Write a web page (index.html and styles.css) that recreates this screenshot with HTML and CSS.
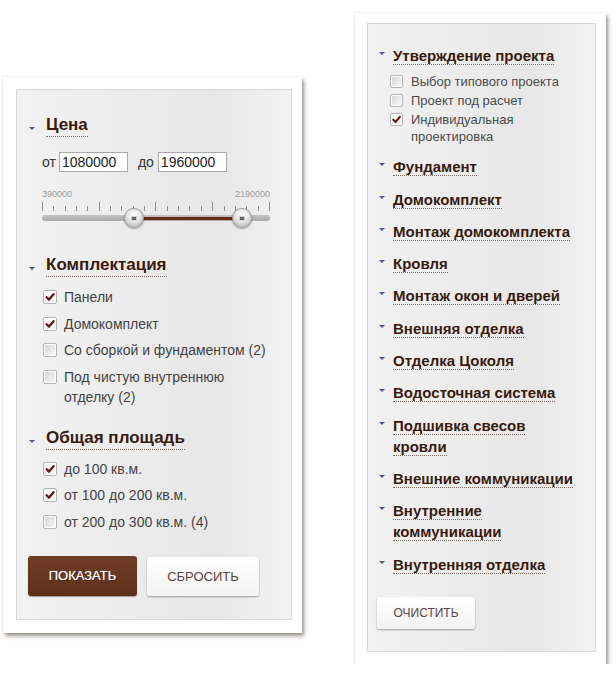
FILE: index.html
```html
<!DOCTYPE html>
<html lang="ru">
<head>
<meta charset="utf-8">
<title>Фильтр</title>
<link rel="stylesheet" href="styles.css">
</head>
<body>
<div class="page">
  <div class="card card-left">
    <div class="inner inner-left">
      <div class="lsec">
        <div class="head-l"><span class="arrow"></span><span class="title-l"><span class="link-l">Цена</span></span></div>
        <div class="price">
          <span class="plabel">от</span><input class="field" type="text" value="1080000">
          <span class="plabel plabel-to">до</span><input class="field" type="text" value="1960000">
        </div>
        <div class="slider">
          <div class="scale"><span>390000</span><span>2190000</span></div>
          <div class="ticks">
            <i class="major"></i><i></i><i></i><i></i><i></i>
            <i class="major"></i><i></i><i></i><i></i><i></i>
            <i class="major"></i><i></i><i></i><i></i><i></i>
            <i class="major"></i><i></i><i></i><i></i><i></i>
            <i class="major"></i>
          </div>
          <div class="track">
            <div class="range" style="left:92px;width:108px"></div>
            <span class="handle" style="left:82px"></span>
            <span class="handle" style="left:190px"></span>
          </div>
        </div>
      </div>

      <div class="lsec lsec-2">
        <div class="head-l"><span class="arrow"></span><span class="title-l"><span class="link-l">Комплектация</span></span></div>
        <div class="list-l">
          <div class="row-l"><span class="cb on"><svg viewBox="0 0 14 14"><path d="M3.6 7.2 L6 9.6 L10.6 4.2"/></svg></span><span class="lbl-l">Панели</span></div>
          <div class="row-l"><span class="cb on"><svg viewBox="0 0 14 14"><path d="M3.6 7.2 L6 9.6 L10.6 4.2"/></svg></span><span class="lbl-l">Домокомплект</span></div>
          <div class="row-l"><span class="cb"></span><span class="lbl-l">Со сборкой и фундаментом (2)</span></div>
          <div class="row-l"><span class="cb"></span><span class="lbl-l">Под чистую внутреннюю отделку (2)</span></div>
        </div>
      </div>

      <div class="lsec lsec-3">
        <div class="head-l"><span class="arrow"></span><span class="title-l"><span class="link-l">Общая площадь</span></span></div>
        <div class="list-l list-l3">
          <div class="row-l"><span class="cb on"><svg viewBox="0 0 14 14"><path d="M3.6 7.2 L6 9.6 L10.6 4.2"/></svg></span><span class="lbl-l">до 100 кв.м.</span></div>
          <div class="row-l"><span class="cb on"><svg viewBox="0 0 14 14"><path d="M3.6 7.2 L6 9.6 L10.6 4.2"/></svg></span><span class="lbl-l">от 100 до 200 кв.м.</span></div>
          <div class="row-l"><span class="cb"></span><span class="lbl-l">от 200 до 300 кв.м. (4)</span></div>
        </div>
      </div>

      <div class="buttons">
        <button class="btn btn-show" type="button">ПОКАЗАТЬ</button>
        <button class="btn btn-reset" type="button">СБРОСИТЬ</button>
      </div>
    </div>
  </div>

  <div class="card card-right">
    <div class="inner inner-right">
      <div class="rsec">
        <div class="head-r"><span class="arrow"></span><span class="title-r"><span class="link-r">Утверждение проекта</span></span></div>
        <div class="list-r">
          <div class="row-r"><span class="cb cb-s"></span><span class="lbl-r">Выбор типового проекта</span></div>
          <div class="row-r"><span class="cb cb-s"></span><span class="lbl-r">Проект под расчет</span></div>
          <div class="row-r"><span class="cb cb-s on"><svg viewBox="0 0 14 14"><path d="M3.6 7.2 L6 9.6 L10.6 4.2"/></svg></span><span class="lbl-r">Индивидуальная проектировка</span></div>
        </div>
      </div>
      <div class="rsec"><div class="head-r"><span class="arrow"></span><span class="title-r"><span class="link-r">Фундамент</span></span></div></div>
      <div class="rsec"><div class="head-r"><span class="arrow"></span><span class="title-r"><span class="link-r">Домокомплект</span></span></div></div>
      <div class="rsec"><div class="head-r"><span class="arrow"></span><span class="title-r"><span class="link-r">Монтаж домокомплекта</span></span></div></div>
      <div class="rsec"><div class="head-r"><span class="arrow"></span><span class="title-r"><span class="link-r">Кровля</span></span></div></div>
      <div class="rsec"><div class="head-r"><span class="arrow"></span><span class="title-r"><span class="link-r">Монтаж окон и дверей</span></span></div></div>
      <div class="rsec"><div class="head-r"><span class="arrow"></span><span class="title-r"><span class="link-r">Внешняя отделка</span></span></div></div>
      <div class="rsec"><div class="head-r"><span class="arrow"></span><span class="title-r"><span class="link-r">Отделка Цоколя</span></span></div></div>
      <div class="rsec"><div class="head-r"><span class="arrow"></span><span class="title-r"><span class="link-r">Водосточная система</span></span></div></div>
      <div class="rsec"><div class="head-r"><span class="arrow"></span><span class="title-r"><span class="link-r">Подшивка свесов кровли</span></span></div></div>
      <div class="rsec"><div class="head-r"><span class="arrow"></span><span class="title-r"><span class="link-r">Внешние коммуникации</span></span></div></div>
      <div class="rsec"><div class="head-r"><span class="arrow"></span><span class="title-r"><span class="link-r">Внутренние коммуникации</span></span></div></div>
      <div class="rsec"><div class="head-r"><span class="arrow"></span><span class="title-r"><span class="link-r">Внутренняя отделка</span></span></div></div>
      <div class="buttons-r">
        <button class="btn btn-clear" type="button">ОЧИСТИТЬ</button>
      </div>
    </div>
  </div>
</div>
</body>
</html>
```

FILE: styles.css
```css
body {
  margin: 0;
  background: #ffffff;
  font-family: "Liberation Sans", Arial, sans-serif;
}

.page {
  display: flex;
  align-items: flex-start;
  gap: 53px;
  padding: 13px 0 0 3px;
}

.card {
  box-sizing: border-box;
  background: #ffffff;
  box-shadow: 0 0 2px rgba(0, 0, 0, 0.12), 2px 3px 4px rgba(75, 58, 48, 0.55);
}

.card-left {
  width: 299px;
  margin-top: 64px;
  padding: 12px 10px 13px 13px;
}

.card-right {
  width: 251px;
  padding: 10px 10px 12px 12px;
}

.inner {
  border: 1px solid #d8d8d8;
  background: linear-gradient(90deg, #f2f2f2 0%, #ececec 40%, #e7e7e7 72%, #f3f3f3 100%);
}

.inner-left {
  padding: 25px 0 23px 0;
}

.inner-right {
  padding: 21px 0 22px 0;
}

.arrow {
  flex: none;
  width: 0;
  height: 0;
  border-left: 3px solid transparent;
  border-right: 3px solid transparent;
  border-top: 3px solid #4c5c86;
}

/* left headings */
.head-l {
  display: flex;
  align-items: flex-start;
  padding-left: 12px;
  font-size: 17px;
  line-height: 20px;
  font-weight: bold;
  color: #381a0e;
}

.head-l .arrow {
  margin-top: 12px;
  margin-right: 11px;
}

.link-l {
  border-bottom: 1px dotted #7a6a62;
  padding-bottom: 2px;
}

.lsec-2 {
  margin-top: 34px;
}

.lsec-3 {
  margin-top: 21px;
}

/* price row */
.price {
  display: flex;
  align-items: center;
  height: 20px;
  margin: 17px 0 0 25px;
  font-size: 14px;
  color: #333333;
}

.plabel {
  margin-right: 3px;
}

.plabel-to {
  margin-left: 10px;
  margin-right: 4px;
}

.field {
  box-sizing: border-box;
  width: 69px;
  height: 20px;
  margin: 0;
  padding: 0 0 0 2px;
  border: 1px solid #a9a9a9;
  background: #ffffff;
  font-family: "Liberation Sans", Arial, sans-serif;
  font-size: 14px;
  color: #222222;
  outline: none;
}

/* slider */
.slider {
  width: 228px;
  margin: 18px 0 0 25px;
}

.scale {
  display: flex;
  justify-content: space-between;
  height: 9px;
  margin-top: 1px;
  font-size: 9px;
  line-height: 9px;
  color: #9a9a9a;
}

.ticks {
  display: flex;
  justify-content: space-between;
  align-items: flex-end;
  height: 9px;
  margin-top: 3px;
}

.ticks i {
  display: block;
  width: 1px;
  height: 5px;
  background: #8f8f8f;
}

.ticks i.major {
  height: 9px;
}

.track {
  position: relative;
  height: 6px;
  margin-top: 4px;
  border-radius: 3px;
  background: linear-gradient(#c2c2c2, #acacac);
}

.range {
  position: absolute;
  top: 1.5px;
  height: 3px;
  background: #6a2a12;
}

.handle {
  position: absolute;
  top: -7px;
  box-sizing: border-box;
  width: 20px;
  height: 20px;
  border-radius: 50%;
  border: 1px solid #9c9c9c;
  background: radial-gradient(circle at 50% 35%, #ffffff 0%, #e6e6e6 45%, #bdbdbd 80%, #a5a5a5 100%);
  box-shadow: 0 1px 2px rgba(0, 0, 0, 0.3);
}

.handle::after {
  content: "";
  position: absolute;
  left: 6px;
  top: 6.5px;
  width: 4px;
  height: 3px;
  border: 1px solid #d0d0d0;
  background: #666666;
}

/* checkboxes */
.cb {
  flex: none;
  box-sizing: border-box;
  position: relative;
  width: 14px;
  height: 14px;
  border: 1px solid #b3b3b3;
  border-radius: 2px;
  background: linear-gradient(135deg, #d2d2d2 0%, #ececec 60%, #f8f8f8 100%);
  box-shadow: inset 0 0 0 1px #ffffff;
}

.cb.on {
  background: linear-gradient(#fdfdfd, #ececec);
}

.cb svg {
  position: absolute;
  left: -1px;
  top: -1px;
  width: 14px;
  height: 14px;
}

.cb svg path {
  fill: none;
  stroke: #5a1a1a;
  stroke-width: 2.3;
  stroke-linecap: round;
  stroke-linejoin: round;
}

.list-l {
  display: flex;
  flex-direction: column;
  gap: 6.5px;
  margin: 12px 0 0 26px;
}

.list-l3 {
  margin-top: 11px;
}

.row-l {
  display: flex;
  align-items: flex-start;
  font-size: 14px;
  line-height: 20px;
  color: #444444;
}

.row-l .cb {
  margin-top: 3px;
  margin-right: 7px;
}

.lbl-l {
  max-width: 206px;
}

/* buttons */
.buttons {
  display: flex;
  gap: 10px;
  margin: 24px 0 0 11px;
}

.btn {
  box-sizing: border-box;
  margin: 0;
  padding: 0;
  border: none;
  border-radius: 3px;
  font-family: "Liberation Sans", Arial, sans-serif;
  cursor: pointer;
}

.btn-show {
  width: 109px;
  height: 40px;
  background: linear-gradient(#703e26, #5e2e1a);
  color: #ffffff;
  font-size: 13px;
  text-shadow: 0 0 1px rgba(255, 255, 255, 0.6), 1px 1px 1px rgba(0, 0, 0, 0.35);
  box-shadow: 0 1px 1px rgba(0, 0, 0, 0.35);
}

.btn-reset {
  width: 112px;
  height: 39px;
  margin-top: 1px;
  background: linear-gradient(#ffffff, #f3f3f3);
  color: #584343;
  font-size: 13px;
  box-shadow: 0 1px 2px rgba(0, 0, 0, 0.35);
}

/* right headings */
.rsec + .rsec {
  margin-top: 11.3px;
}

.head-r {
  display: flex;
  align-items: flex-start;
  padding-left: 11px;
  font-size: 15px;
  line-height: 21px;
  font-weight: bold;
  color: #381a0e;
}

.head-r .arrow {
  margin-top: 7px;
  margin-right: 8px;
}

.title-r {
  width: 188px;
}

.link-r {
  border-bottom: 1px dotted #7a6a62;
}

.list-r {
  display: flex;
  flex-direction: column;
  gap: 2px;
  margin: 7px 0 2px 22px;
}

.row-r {
  display: flex;
  align-items: flex-start;
  font-size: 13px;
  line-height: 17px;
  color: #4c4c4c;
}

.cb-s {
  width: 13px;
  height: 13px;
  margin-top: 2px;
  margin-right: 8px;
}

.cb-s svg {
  width: 13px;
  height: 13px;
}

.lbl-r {
  max-width: 160px;
}

.buttons-r {
  margin: 22px 0 0 9px;
}

.btn-clear {
  width: 98px;
  height: 32px;
  background: linear-gradient(#ffffff, #f2f2f2);
  color: #5a4444;
  font-size: 12px;
  box-shadow: 0 1px 2px rgba(0, 0, 0, 0.35);
}
```
